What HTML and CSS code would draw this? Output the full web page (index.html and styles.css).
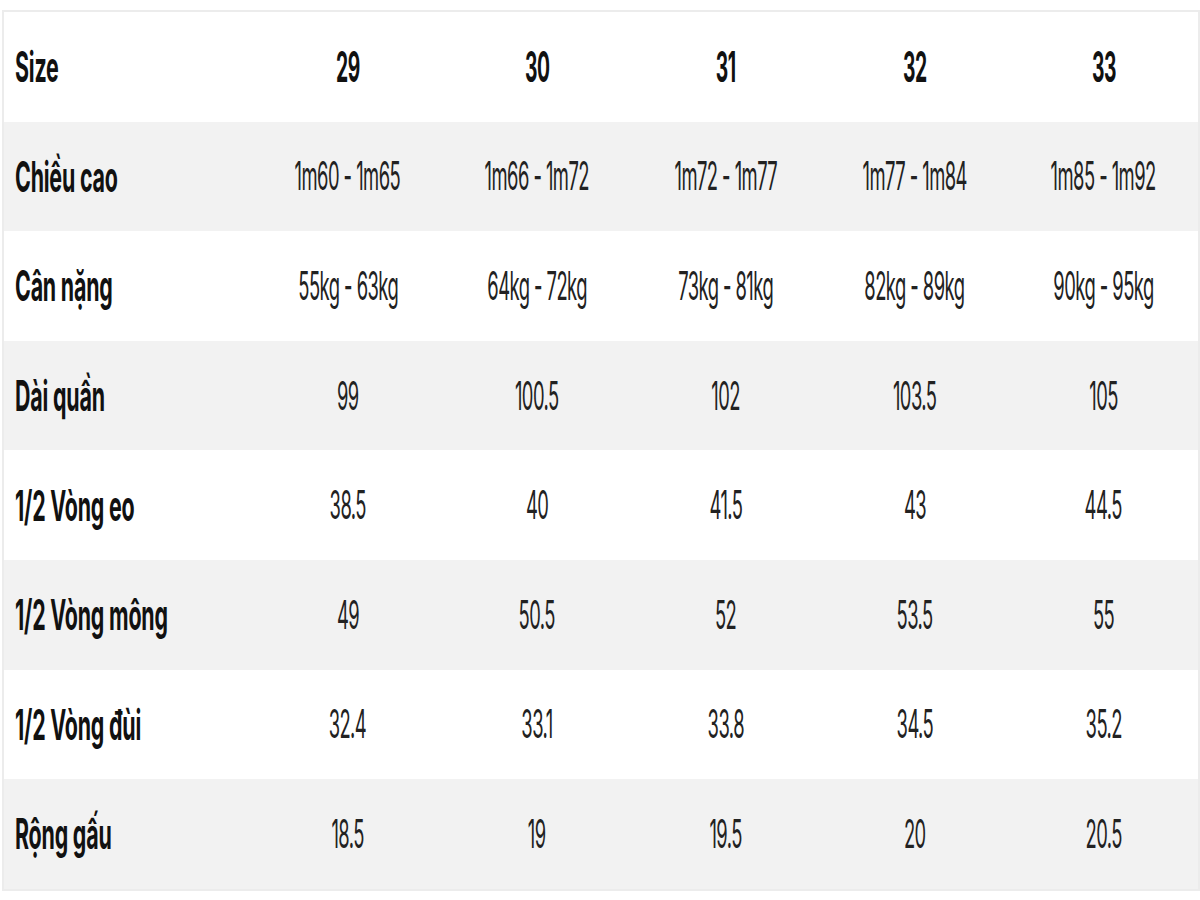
FILE: index.html
```html
<!DOCTYPE html>
<html lang="vi">
<head>
<meta charset="utf-8">
<title>Bảng size quần</title>
<link rel="stylesheet" href="styles.css">
</head>
<body>
<div class="page">
  <table class="size-table">
    <colgroup>
      <col class="col-label">
      <col><col><col><col><col>
    </colgroup>
    <tbody>
      <tr class="row head">
        <th class="label"><span class="t">Size</span></th>
        <th class="val"><span class="t">29</span></th>
        <th class="val"><span class="t">30</span></th>
        <th class="val"><span class="t">31</span></th>
        <th class="val"><span class="t">32</span></th>
        <th class="val"><span class="t">33</span></th>
      </tr>
      <tr class="row alt">
        <th class="label"><span class="t">Chiều cao</span></th>
        <td class="val"><span class="t">1m60 - 1m65</span></td>
        <td class="val"><span class="t">1m66 - 1m72</span></td>
        <td class="val"><span class="t">1m72 - 1m77</span></td>
        <td class="val"><span class="t">1m77 - 1m84</span></td>
        <td class="val"><span class="t">1m85 - 1m92</span></td>
      </tr>
      <tr class="row">
        <th class="label"><span class="t">Cân nặng</span></th>
        <td class="val"><span class="t">55kg - 63kg</span></td>
        <td class="val"><span class="t">64kg - 72kg</span></td>
        <td class="val"><span class="t">73kg - 81kg</span></td>
        <td class="val"><span class="t">82kg - 89kg</span></td>
        <td class="val"><span class="t">90kg - 95kg</span></td>
      </tr>
      <tr class="row alt">
        <th class="label"><span class="t">Dài quần</span></th>
        <td class="val"><span class="t">99</span></td>
        <td class="val"><span class="t">100.5</span></td>
        <td class="val"><span class="t">102</span></td>
        <td class="val"><span class="t">103.5</span></td>
        <td class="val"><span class="t">105</span></td>
      </tr>
      <tr class="row">
        <th class="label"><span class="t">1/2 Vòng eo</span></th>
        <td class="val"><span class="t">38.5</span></td>
        <td class="val"><span class="t">40</span></td>
        <td class="val"><span class="t">41.5</span></td>
        <td class="val"><span class="t">43</span></td>
        <td class="val"><span class="t">44.5</span></td>
      </tr>
      <tr class="row alt">
        <th class="label"><span class="t">1/2 Vòng mông</span></th>
        <td class="val"><span class="t">49</span></td>
        <td class="val"><span class="t">50.5</span></td>
        <td class="val"><span class="t">52</span></td>
        <td class="val"><span class="t">53.5</span></td>
        <td class="val"><span class="t">55</span></td>
      </tr>
      <tr class="row">
        <th class="label"><span class="t">1/2 Vòng đùi</span></th>
        <td class="val"><span class="t">32.4</span></td>
        <td class="val"><span class="t">33.1</span></td>
        <td class="val"><span class="t">33.8</span></td>
        <td class="val"><span class="t">34.5</span></td>
        <td class="val"><span class="t">35.2</span></td>
      </tr>
      <tr class="row alt">
        <th class="label"><span class="t">Rộng gấu</span></th>
        <td class="val"><span class="t">18.5</span></td>
        <td class="val"><span class="t">19</span></td>
        <td class="val"><span class="t">19.5</span></td>
        <td class="val"><span class="t">20</span></td>
        <td class="val"><span class="t">20.5</span></td>
      </tr>
    </tbody>
  </table>
</div>
</body>
</html>
```

FILE: styles.css
```css
html, body {
  margin: 0;
  padding: 0;
  background: #ffffff;
}

.page {
  padding: 10px 0 0 2px;
}

.size-table {
  width: 1198px;
  border-collapse: separate;
  border-spacing: 0;
  table-layout: fixed;
  border: 2px solid #ececec;
  font-family: Inter, "Noto Sans", sans-serif;
  color: #1a1a1a;
}

.col-label {
  width: 249.4px;
}

.row {
  height: 109.6px;
  background: #ffffff;
}

.row.alt {
  background: #f2f2f2;
}

.label,
.val {
  padding: 0;
  vertical-align: middle;
}

.label {
  text-align: left;
  padding-left: 11px;
  font-weight: 700;
  font-size: 21px;
  color: #111111;
}

.val {
  text-align: center;
  font-weight: 400;
  font-size: 20px;
  color: #222222;
}

.head .val {
  font-weight: 700;
  font-size: 21px;
  color: #111111;
}

.t {
  display: inline-block;
  line-height: 1;
  letter-spacing: -0.6px;
  transform: scale(0.92, 2);
  transform-origin: center center;
}

.label .t {
  letter-spacing: -0.2px;
  transform: scale(1.02, 2);
  transform-origin: left center;
}
```
